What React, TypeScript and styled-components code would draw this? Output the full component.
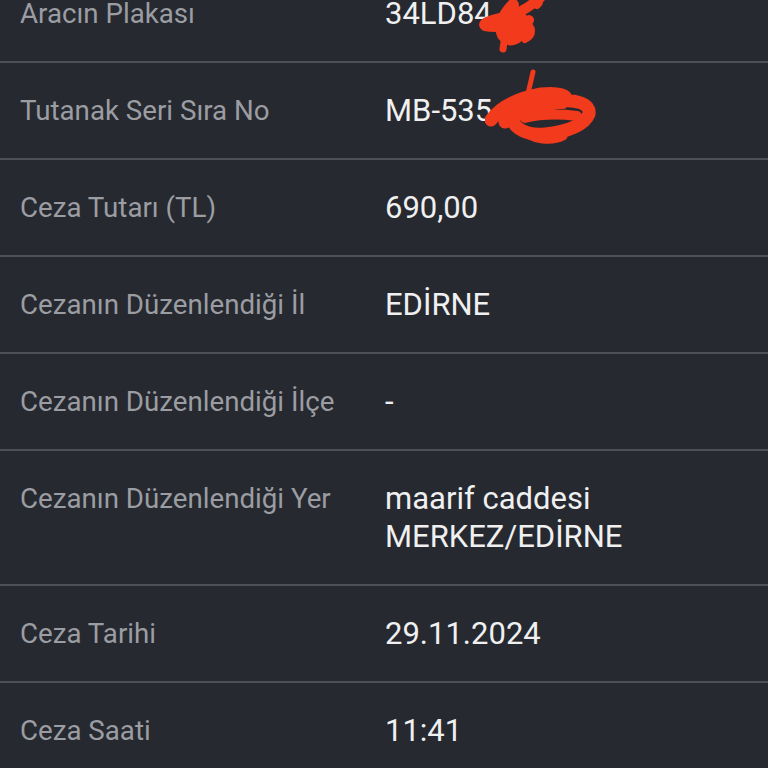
import React from "react";
import styled, { createGlobalStyle } from "styled-components";

const Global = createGlobalStyle`
  html, body { margin: 0; padding: 0; background: #262930; }
  body { font-family: Roboto, "Noto Sans", sans-serif; overflow: hidden; }
`;

const Page = styled.div`
  width: 768px;
  height: 768px;
  overflow: hidden;
  background: #262930;
`;

const List = styled.div`
  display: flex;
  flex-direction: column;
  margin-top: -34px;
`;

const Row = styled.div`
  display: grid;
  grid-template-columns: 365px 1fr;
  align-items: start;
  padding: 29px 20px 28px 20px;
  border-bottom: 2px solid #4d5057;
`;

const Label = styled.div`
  color: #9b9da2;
  font-size: 27.7px;
  line-height: 38px;
`;

const Value = styled.div`
  position: relative;
  color: #f0f0f0;
  font-size: 31px;
  line-height: 38px;
`;

const Scribble = styled.svg`
  position: absolute;
  pointer-events: none;
`;

const rows: { label: string; value: React.ReactNode; scribble?: number }[] = [
  { label: "Aracın Plakası", value: "34LD84", scribble: 1 },
  { label: "Tutanak Seri Sıra No", value: "MB-535", scribble: 2 },
  { label: "Ceza Tutarı (TL)", value: "690,00" },
  { label: "Cezanın Düzenlendiği İl", value: "EDİRNE" },
  { label: "Cezanın Düzenlendiği İlçe", value: "-" },
  {
    label: "Cezanın Düzenlendiği Yer",
    value: (
      <>
        maarif caddesi
        <br />
        MERKEZ/EDİRNE
      </>
    ),
  },
  { label: "Ceza Tarihi", value: "29.11.2024" },
  { label: "Ceza Saati", value: "11:41" },
];

const Scribble1 = () => (
  <Scribble width="90" height="70" viewBox="0 0 90 70" style={{ left: 88, top: -4 }}>
    <g fill="none" stroke="#f23a1c" strokeLinecap="round" strokeLinejoin="round">
      <path d="M70 4 C60 14 48 22 32 26 C18 29 8 32 12 35 C26 38 44 34 56 29" strokeWidth="10" />
      <path d="M40 14 C30 24 26 36 30 44 C36 52 46 48 50 38 C52 28 46 22 38 26 C32 30 32 40 40 42" strokeWidth="12" />
      <path d="M32 44 L30 58" strokeWidth="7" />
      <path d="M52 32 C60 36 60 44 52 48" strokeWidth="8" />
      <path d="M58 6 C64 2 70 8 64 14" strokeWidth="8" />
    </g>
  </Scribble>
);

const Scribble2 = () => (
  <Scribble width="120" height="80" viewBox="0 0 120 80" style={{ left: 100, top: -24 }}>
    <g fill="none" stroke="#f23a1c" strokeLinecap="round" strokeLinejoin="round">
      <path d="M48 4 L42 30" strokeWidth="5" />
      <path d="M6 52 C16 38 34 30 56 26 C74 24 84 28 80 32 C68 38 40 38 30 46 C22 56 38 68 60 66 C84 64 100 56 104 46 C106 36 90 30 70 34 C50 38 28 48 20 54" strokeWidth="13" />
      <path d="M36 60 C46 72 66 74 78 68" strokeWidth="9" />
      <path d="M26 44 C40 38 60 34 78 36" strokeWidth="10" />
      <path d="M40 50 C56 46 76 46 92 48" strokeWidth="10" />
    </g>
  </Scribble>
);

export default function App() {
  return (
    <Page>
      <Global />
      <List>
        {rows.map((r) => (
          <Row key={r.label}>
            <Label>{r.label}</Label>
            <Value>
              {r.value}
              {r.scribble === 1 && <Scribble1 />}
              {r.scribble === 2 && <Scribble2 />}
            </Value>
          </Row>
        ))}
      </List>
    </Page>
  );
}
